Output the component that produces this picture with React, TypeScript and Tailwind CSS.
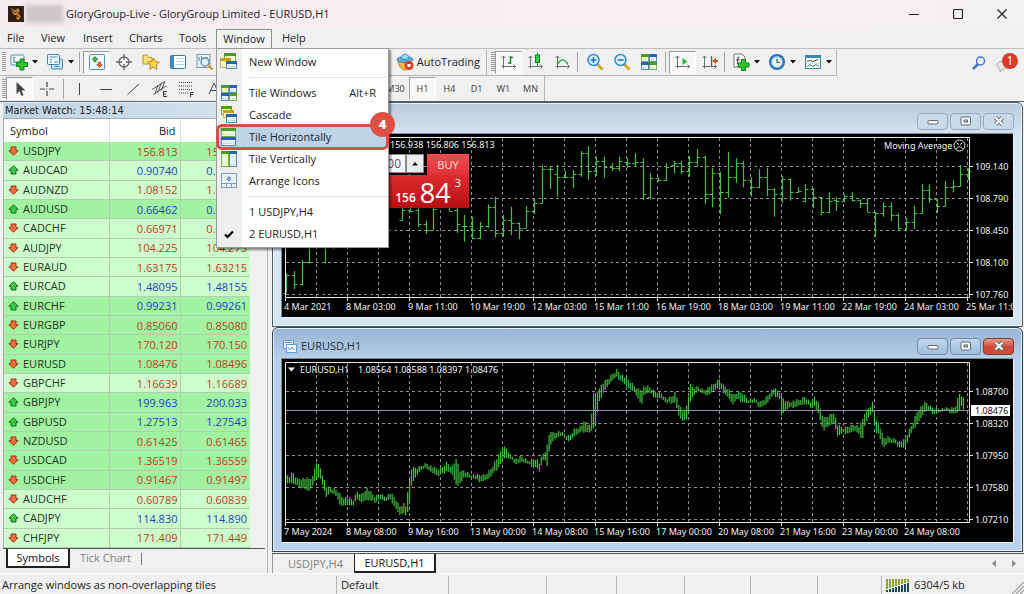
import type { ReactNode } from "react";

type IconProps = { children: ReactNode; size?: number };

function Icon({ children, size = 18 }: IconProps) {
  return (
    <svg width={size} height={size} viewBox="0 0 18 18" fill="none" className="shrink-0" aria-hidden="true">
      {children}
    </svg>
  );
}

const Plus = ({ x, y }: { x: number; y: number }) => (
  <path
    transform={`translate(${x} ${y})`}
    d="M3.5 0h4v3.5H11v4H7.5V11h-4V7.500H0v-4h3.5z"
    fill="#2fc52f"
    stroke="#12801a"
    strokeWidth="1"
  />
);

const NewChartIcon = () => (
  <Icon>
    <rect x="1" y="2" width="13" height="10" rx="1" fill="#f4fbff" stroke="#4d8fa8" />
    <path d="M4 4v6M3 5l1-1 1 1M4 9h8" stroke="#3d7f9c" />
    <Plus x={6.5} y={6} />
  </Icon>
);

const ProfilesIcon = () => (
  <Icon>
    <rect x="5.500" y="6" width="11" height="10" rx="1" fill="#d8ecfb" stroke="#3b82c0" />
    <rect x="1.500" y="1.500" width="12" height="10" rx="1" fill="#eef8ff" stroke="#3b82c0" />
    <path d="M3.500 4h8M4 6.500h2M4 9h2M8 9h4M8 13.500h6" stroke="#4a90c8" />
  </Icon>
);

const MarketIcon = () => (
  <Icon>
    <rect x="1.500" y="1.500" width="15" height="15" rx="1" fill="#f3fbff" stroke="#4c93bd" />
    <path d="M7 3.500L9.800 6.300H8.200V8.700H5.800V6.300H4.200z" fill="#3fc53f" stroke="#147a18" strokeWidth=".7" />
    <path d="M11.500 14.500L8.700 11.700h1.600V9.300h2.400v2.400h1.600z" fill="#f0693f" stroke="#a02c12" strokeWidth=".7" />
  </Icon>
);

const TargetIcon = () => (
  <Icon>
    <circle cx="9" cy="9" r="5" stroke="#666" strokeWidth="1.300" />
    <path d="M9 1v6M9 11v6M1 9h6M11 9h6" stroke="#666" strokeWidth="1.300" />
  </Icon>
);

const FolderStarIcon = () => (
  <Icon>
    <path d="M1 3.500V11h9V4.500H6L5 2H1.500z" fill="#ffe07a" stroke="#b98f1d" />
    <path d="M11.500 5l1.700 3.700 4.100.5-3 2.800.8 4.200-3.600-2.100-3.700 2.100.8-4.200-3-2.800 4.200-.5z" fill="#ffd93b" stroke="#a9851c" />
  </Icon>
);

const NavigatorIcon = () => (
  <Icon>
    <rect x="1.500" y="2.500" width="15" height="13" rx="1" fill="#fff" stroke="#3277ae" />
    <path d="M2 3h3v12H2z" fill="#3f8cc8" />
    <path d="M7.500 5.500h7.500M7.500 8.500h7.500M7.500 11.500h7.500" stroke="#b4cee2" />
  </Icon>
);

const TesterIcon = () => (
  <Icon>
    <rect x="1" y="1.500" width="13" height="13" fill="#eef3f7" stroke="#7b97ab" />
    <path d="M3 4v4M5.500 3v6M11 4v3" stroke="#5480a0" />
    <circle cx="9" cy="9" r="4" fill="#dff1ff" stroke="#5c88a8" strokeWidth="1.300" />
    <path d="M12 12l4.500 4.500" stroke="#d59a28" strokeWidth="2.400" />
  </Icon>
);

const RobotIcon = () => (
  <Icon>
    <path d="M2 8c1 6 4 9 7 9s5-2 6-6z" fill="#f0b93c" stroke="#b37a1b" strokeWidth=".8" />
    <ellipse cx="9" cy="6.500" rx="8" ry="3" fill="#54b0d6" stroke="#2b7ba2" strokeWidth=".8" />
    <path d="M5 5c0-5 8-5 8 0-2 2-6 2-8 0z" fill="#8fd6ef" stroke="#2b7ba2" strokeWidth=".8" />
    <circle cx="13" cy="12.500" r="4.500" fill="#dd3a20" />
    <rect x="11.500" y="11" width="3" height="3" fill="#fff" />
  </Icon>
);

const Axes = () => (
  <path d="M3.500 15.500V3M1.500 5l2-2 2 2M1.500 13.500h14M13.500 11.500l2 2-2 2" stroke="#66706b" />
);

const BarsIcon = () => (
  <Icon>
    <Axes />
    <path d="M10.500 3v8M10.500 4.500h2.500M8 10h2.500" stroke="#188a28" strokeWidth="1.500" />
  </Icon>
);

const CandleIcon = () => (
  <Icon>
    <Axes />
    <path d="M10.500 0v13" stroke="#14801f" />
    <rect x="8.500" y="2" width="4" height="7.500" fill="#2fd24a" stroke="#14801f" />
  </Icon>
);

const LineChartIcon = () => (
  <Icon>
    <Axes />
    <path d="M4 11c3-6 6-5 10 0" stroke="#2ba043" strokeWidth="1.300" />
  </Icon>
);

const LensIcon = ({ plus }: { plus: boolean }) => (
  <Icon>
    <path d="M11 11l5.500 5.500" stroke="#d6a52c" strokeWidth="3" />
    <circle cx="7.500" cy="7" r="5.500" fill="#d9f1fe" stroke="#2e8ecb" strokeWidth="1.500" />
    <path d={plus ? "M4.500 7h6M7.500 4v6" : "M4.500 7h6"} stroke="#1f6fb0" strokeWidth="1.500" />
  </Icon>
);

function MiniWindow({ x, y, w, h, c }: { x: number; y: number; w: number; h: number; c: "g" | "b" | "o" }) {
  const colors = { g: ["#4c9a2a", "#eef8df"], b: ["#2864b4", "#e6f1ff"], o: ["#c99a2c", "#fff5d2"] }[c];
  return (
    <g>
      <rect x={x + 0.5} y={y + 0.5} width={w - 1} height={h - 1} fill={colors[1]} stroke={colors[0]} strokeOpacity=".75" />
      <rect x={x} y={y} width={w} height="3" fill={colors[0]} />
      <path d={`M${x + 2} ${y + h - 2.5}h${w - 4}`} stroke={colors[0]} strokeDasharray="1 1" opacity=".3" />
    </g>
  );
}

const TileIcon = () => (
  <Icon>
    <MiniWindow x={1} y={1} w={8} h={8} c="g" />
    <MiniWindow x={9} y={1} w={8} h={8} c="b" />
    <MiniWindow x={1} y={9} w={8} h={8} c="b" />
    <MiniWindow x={9} y={9} w={8} h={8} c="g" />
  </Icon>
);

const CascadeIcon = () => (
  <Icon>
    <MiniWindow x={1} y={0} w={11} h={9} c="g" />
    <MiniWindow x={3} y={4} w={11} h={8} c="o" />
    <MiniWindow x={6} y={8} w={11} h={9} c="b" />
  </Icon>
);

const NewWindowIcon = () => (
  <Icon>
    <MiniWindow x={4} y={0} w={12} h={10} c="g" />
    <MiniWindow x={0} y={5} w={11} h={10} c="o" />
    <MiniWindow x={6} y={8} w={11} h={8} c="b" />
  </Icon>
);

const TileHIcon = () => (
  <Icon>
    <MiniWindow x={1} y={0} w={15} h={9} c="g" />
    <MiniWindow x={1} y={9} w={15} h={9} c="b" />
  </Icon>
);

const TileVIcon = () => (
  <Icon>
    <MiniWindow x={1} y={1} w={8} h={16} c="g" />
    <MiniWindow x={9} y={1} w={8} h={16} c="b" />
  </Icon>
);

const ArrangeIcon = () => (
  <Icon>
    <rect x="1.500" y="1.500" width="15" height="14" fill="#eaf3fa" stroke="#7f9db8" />
    <path d="M1 11.500h16M6.500 12v3M11.500 12v3" stroke="#7f9db8" />
    <path d="M9 4v5M7 7l2 2 2-2M7 6h4" stroke="#3f7fb8" />
  </Icon>
);

const ScrollIcon = () => (
  <Icon>
    <Axes />
    <path d="M8.500 5v7l5-3.500z" fill="#2fb542" />
  </Icon>
);

const ShiftIcon = () => (
  <Icon>
    <Axes />
    <path d="M10.500 3v10" stroke="#5a6660" strokeWidth="1.300" />
    <path d="M11 8l4-3v2h2v2h-2v2z" fill="#c8562c" />
  </Icon>
);

const IndicatorIcon = () => (
  <Icon>
    <path d="M2 1h8l3 3v10H2z" fill="#fafafa" stroke="#777" />
    <path d="M7.500 4c-2 0-2 1-2 3v4M4 7h4" stroke="#555" strokeWidth="1.200" />
    <Plus x={6} y={6.5} />
  </Icon>
);

const ClockIcon = () => (
  <Icon>
    <circle cx="9" cy="9" r="8" fill="#2473b9" />
    <circle cx="9" cy="9" r="5.500" fill="#e8f5ff" stroke="#7fb8e6" />
    <path d="M9 5.500V9.500h3" stroke="#4a5a68" strokeWidth="1.200" />
  </Icon>
);

const TemplateIcon = () => (
  <Icon>
    <rect x="1.500" y="2.500" width="15" height="13" fill="#f4fbff" stroke="#3d86b8" />
    <path d="M1 4h16" stroke="#3d86b8" strokeWidth="2" />
    <path d="M3 8.500l3-1 3 1 5-2" stroke="#444" />
    <path d="M3 13.500l3-2 3 2 3-2 3 2" stroke="#3a9a50" />
    <path d="M2 10.500h14" stroke="#9dc3dc" strokeDasharray="1 1" />
  </Icon>
);

const Grip = () => (
  <span className="ml-0.5 h-5 w-1 shrink-0 bg-[repeating-linear-gradient(to_bottom,#9c9c9c_0_1px,transparent_1px_2px)]" />
);
const Sep = () => <span className="mx-px h-5 w-px shrink-0 bg-[#a5a5a5]" />;

function Tool({ label, pressed, children }: { label: string; pressed?: boolean; children: ReactNode }) {
  return (
    <button
      type="button"
      aria-label={label}
      className={
        pressed
          ? "flex h-[23px] w-[27px] shrink-0 items-center justify-center border border-[#9b9b9b] border-r-white border-b-white bg-[#f8f8f8]"
          : "flex h-[23px] w-[27px] shrink-0 items-center justify-center"
      }
    >
      {children}
    </button>
  );
}

function DropTool({ label, children }: { label: string; children: ReactNode }) {
  return (
    <button type="button" aria-label={label} className="flex h-[23px] w-9 shrink-0 items-center gap-1 pl-1">
      {children}
      <svg width="6" height="4" viewBox="0 0 6 4" aria-hidden="true">
        <path d="M0 0h6L3 3.500z" fill="#111" />
      </svg>
    </button>
  );
}

function TitleBar() {
  return (
    <header className="flex h-7 shrink-0 items-center bg-linear-to-r from-[#f4eaf0] via-[#faedf3] via-55% to-[#f3f1f2]">
      <svg width="16" height="16" viewBox="0 0 16 16" className="ml-2 shrink-0" aria-hidden="true">
        <rect width="16" height="16" fill="#2c1c12" />
        <path d="M3 2l4 2 3-2 2 3-2 2 3 3-2 4-3-1 1-3-4-2z" fill="#b8802f" />
        <path d="M4 3l3 4 2-2M8 9l3 2" stroke="#5b3212" fill="none" />
      </svg>
      <span className="ml-0.5 h-[18px] w-[37px] shrink-0 bg-[#cbc6c9] blur-[2px]" />
      <h1 className="ml-[3px] flex-1 whitespace-nowrap text-[#222]">
        GloryGroup-Live - GloryGroup Limited - EURUSD,H1
      </h1>
      <div className="flex">
        <button type="button" aria-label="Minimize" className="flex h-7 w-11 items-center justify-center">
          <svg width="10" height="10"><path d="M0 5.500h10" stroke="#222" /></svg>
        </button>
        <button type="button" aria-label="Maximize" className="flex h-7 w-11 items-center justify-center">
          <svg width="10" height="10"><rect x=".5" y=".5" width="9" height="9" rx="1" fill="none" stroke="#222" strokeWidth="1.200" /></svg>
        </button>
        <button type="button" aria-label="Close" className="flex h-7 w-11 items-center justify-center">
          <svg width="10" height="10"><path d="M.5.5l9 9M9.500.5l-9 9" stroke="#222" strokeWidth="1.200" /></svg>
        </button>
      </div>
    </header>
  );
}

type Entry = { label: string; icon?: ReactNode; hint?: string };

const menuGroups: Entry[][] = [
  [{ label: "New Window", icon: <NewWindowIcon /> }],
  [
    { label: "Tile Windows", icon: <TileIcon />, hint: "Alt+R" },
    { label: "Cascade", icon: <CascadeIcon /> },
    { label: "Tile Horizontally", icon: <TileHIcon /> },
    { label: "Tile Vertically", icon: <TileVIcon /> },
    { label: "Arrange Icons", icon: <ArrangeIcon /> },
  ],
  [
    { label: "1 USDJPY,H4" },
    {
      label: "2 EURUSD,H1",
      icon: (
        <Icon>
          <path d="M5 9.500l2.500 2.500L13 6.500" stroke="#000" strokeWidth="2.200" />
        </Icon>
      ),
    },
  ],
];

function WindowMenu() {
  return (
    <div
      role="menu"
      className="absolute top-[19px] left-0 z-20 w-[173px] border border-[#9a9a9a] bg-[linear-gradient(to_right,#efefef_25px,#fff_25px)] py-0.5 shadow-[2px_2px_2px_rgba(0,0,0,0.45)]"
    >
      {menuGroups.map((group, g) => (
        <div key={g} role="group">
          {g > 0 && <div className="ml-8 h-[9px] bg-[linear-gradient(#e4e4e4,#e4e4e4)] bg-[length:100%_1px] bg-center bg-no-repeat" />}
          {group.map((item) => {
            const active = item.label === "Tile Horizontally";
            return (
              <div key={item.label} className="relative">
                <button
                  type="button"
                  role="menuitem"
                  className={
                    active
                      ? "flex h-[22px] w-full items-center bg-[#bdd3e8] pr-3 pl-[3px] text-[#1b2430]"
                      : "flex h-[22px] w-full items-center pr-3 pl-[3px] text-[#222]"
                  }
                >
                  <span className="flex w-[29px] shrink-0">{item.icon}</span>
                  <span className="whitespace-nowrap">{item.label}</span>
                  {item.hint && <span className="ml-auto">{item.hint}</span>}
                </button>
                {active && (
                  <>
                    <span className="pointer-events-none absolute -inset-x-px -inset-y-0.5 rounded-md border-[3px] border-[#d75045]" />
                    <span className="absolute -top-[14px] -right-[7px] flex size-[25px] items-center justify-center rounded-full bg-[#df4f43] text-[13px] font-black text-white">
                      4
                    </span>
                  </>
                )}
              </div>
            );
          })}
        </div>
      ))}
    </div>
  );
}

function MenuBar() {
  return (
    <nav className="flex h-5 shrink-0 items-center bg-[#f0f0f0] pl-[7px] text-[#222]">
      <button type="button" className="w-[34px] text-left">File</button>
      <button type="button" className="w-[42px] text-left">View</button>
      <button type="button" className="w-[46px] text-left">Insert</button>
      <button type="button" className="w-[50px] text-left">Charts</button>
      <button type="button" className="w-[37px] text-left">Tools</button>
      <div className="relative z-20">
        <button type="button" aria-expanded="true" className="block h-[19px] w-14 border border-b-0 border-[#8d8d8d] bg-[#f4f4f4]">
          Window
        </button>
        <WindowMenu />
      </div>
      <button type="button" className="ml-2.5">Help</button>
    </nav>
  );
}

function MainToolbar() {
  return (
    <div className="flex h-7 shrink-0 items-center border-t border-[#bdbdbd] bg-[#f0f0f0]">
      <div className="flex h-[26px] w-[487px] shrink-0 items-center border-r border-b border-[#b5b5b5]">
        <Grip />
        <DropTool label="New chart"><NewChartIcon /></DropTool>
        <DropTool label="Profiles"><ProfilesIcon /></DropTool>
        <Sep />
        <span className="w-0.5" />
        <Tool label="Market Watch" pressed><MarketIcon /></Tool>
        <Tool label="Data Window"><TargetIcon /></Tool>
        <Tool label="Navigator"><FolderStarIcon /></Tool>
        <Tool label="Terminal"><NavigatorIcon /></Tool>
        <Tool label="Strategy Tester"><TesterIcon /></Tool>
        <button type="button" className="mr-1.5 ml-auto flex items-center gap-[3px] text-[#1d1d1d]">
          <RobotIcon />
          AutoTrading
        </button>
      </div>
      <div className="flex h-[26px] shrink-0 items-center border-r border-b border-[#b5b5b5] pl-0.5">
        <Grip />
        <Tool label="Bar chart" pressed><BarsIcon /></Tool>
        <Tool label="Candlesticks"><CandleIcon /></Tool>
        <Tool label="Line chart"><LineChartIcon /></Tool>
        <Sep />
        <span className="w-0.5" />
        <Tool label="Zoom in"><LensIcon plus /></Tool>
        <Tool label="Zoom out"><LensIcon plus={false} /></Tool>
        <Tool label="Tile"><TileIcon /></Tool>
        <span className="w-0.5" />
        <Sep />
        <span className="w-0.5" />
        <Tool label="Auto scroll" pressed><ScrollIcon /></Tool>
        <Tool label="Chart shift"><ShiftIcon /></Tool>
        <Sep />
        <span className="w-0.5" />
        <DropTool label="Indicators"><IndicatorIcon /></DropTool>
        <DropTool label="Periods"><ClockIcon /></DropTool>
        <DropTool label="Templates"><TemplateIcon /></DropTool>
      </div>
      <div className="mr-1.5 ml-auto flex items-center gap-2.5">
        <button type="button" aria-label="Search">
          <svg width="14" height="14" viewBox="0 0 14 14" fill="none" className="block">
            <path d="M1 13l5-5" stroke="#4a72c8" strokeWidth="2.500" />
            <circle cx="8.500" cy="5" r="4" fill="#f2f7ff" stroke="#4a72c8" strokeWidth="1.500" />
          </svg>
        </button>
        <button type="button" aria-label="Messages" className="relative h-5 w-[22px]">
          <svg width="14" height="14" viewBox="0 0 14 14" className="absolute bottom-0 left-0">
            <path d="M1 6c0-5 11-5 11 0 0 3-3 4-5 4l-3 3V9.500C2 9 1 8 1 6z" fill="#e8e8ea" stroke="#a8a8ac" />
          </svg>
          <span className="absolute top-0 right-0 flex size-4 items-center justify-center rounded-full bg-[#dc3a26] text-[12px] text-white">1</span>
        </button>
      </div>
    </div>
  );
}

const timeframes = ["M30", "H1", "H4", "D1", "W1", "MN"];

function DrawToolbar() {
  return (
    <div className="flex h-[26px] shrink-0 items-center border-b border-[#5c6468] bg-[#f0f0f0]">
      <div className="flex h-[25px] w-[545px] shrink-0 items-center border-r border-[#b5b5b5]">
        <Grip />
        <Tool label="Cursor" pressed>
          <Icon><path d="M5.500 2v12l3-3 2 5 2-1-2-4.500h4z" fill="#444" /></Icon>
        </Tool>
        <Tool label="Crosshair">
          <Icon><path d="M9 2v5M9 11v5M2 9h5M11 9h5M8.500 9h1" stroke="#444" strokeWidth="1.200" /></Icon>
        </Tool>
        <span className="w-0.5" />
        <Sep />
        <Tool label="Vertical line"><Icon><path d="M9.500 3v12" stroke="#444" /></Icon></Tool>
        <Tool label="Horizontal line"><Icon><path d="M3 9.500h12" stroke="#444" /></Icon></Tool>
        <Tool label="Trendline"><Icon><path d="M3.500 14.500L15 4" stroke="#444" /></Icon></Tool>
        <Tool label="Equidistant channel">
          <Icon>
            <path d="M1 9.500L13 2M2 14.500L15 6M4 14l3-9M7 12.500l3-9M10 11l4-10" stroke="#555" />
            <path d="M16 11.500h-3.500v5H16M12.500 14H15" stroke="#333" />
          </Icon>
        </Tool>
        <Tool label="Fibonacci">
          <Icon>
            <path d="M1 2.500h14M1 6h14M1 9.500h14M1 13h9" stroke="#444" strokeDasharray="1 1" />
            <path d="M15.500 12.500H12.500v4.500M12.500 14.500h2.500" stroke="#333" />
          </Icon>
        </Tool>
        <Tool label="Text"><Icon><path d="M4 14L9 3l5 11M6 10.500h6" stroke="#444" /></Icon></Tool>
        <div className="ml-auto flex text-[9px] text-[#3a3a3a]">
          {timeframes.map((t) => (
            <button
              key={t}
              type="button"
              className={
                t === "H1"
                  ? "h-[23px] w-[27px] border border-[#a5a5a5] border-r-white border-b-white bg-[#f8f8f8]"
                  : "h-[23px] w-[27px]"
              }
            >
              {t}
            </button>
          ))}
        </div>
      </div>
    </div>
  );
}

type Quote = [symbol: string, bid: string, ask: string, up: 0 | 1, deep: 0 | 1];

const quotes: Quote[] = [
  ["USDJPY", "156.813", "156.843", 0, 1],
  ["AUDCAD", "0.90740", "0.90780", 1, 0],
  ["AUDNZD", "1.08152", "1.08202", 0, 0],
  ["AUDUSD", "0.66462", "0.66482", 1, 1],
  ["CADCHF", "0.66971", "0.67011", 0, 0],
  ["AUDJPY", "104.225", "104.275", 0, 0],
  ["EURAUD", "1.63175", "1.63215", 0, 0],
  ["EURCAD", "1.48095", "1.48155", 1, 0],
  ["EURCHF", "0.99231", "0.99261", 1, 1],
  ["EURGBP", "0.85060", "0.85080", 0, 1],
  ["EURJPY", "170.120", "170.150", 0, 1],
  ["EURUSD", "1.08476", "1.08496", 0, 1],
  ["GBPCHF", "1.16639", "1.16689", 0, 0],
  ["GBPJPY", "199.963", "200.033", 1, 1],
  ["GBPUSD", "1.27513", "1.27543", 1, 1],
  ["NZDUSD", "0.61425", "0.61465", 0, 1],
  ["USDCAD", "1.36519", "1.36559", 0, 1],
  ["USDCHF", "0.91467", "0.91497", 0, 1],
  ["AUDCHF", "0.60789", "0.60839", 0, 0],
  ["CADJPY", "114.830", "114.890", 1, 0],
  ["CHFJPY", "171.409", "171.449", 0, 0],
];

function Direction({ up }: { up: boolean }) {
  return (
    <svg width="11" height="10" viewBox="0 0 11 10" className="shrink-0" aria-label={up ? "up" : "down"}>
      {up ? (
        <path d="M5.500.7l4.600 4.600H8v3.700H3V5.300H.9z" fill="#3fc64a" stroke="#11701e" />
      ) : (
        <path d="M5.500 9.300l4.600-4.600H8V1H3v3.700H.9z" fill="#f0713a" stroke="#a3301a" />
      )}
    </svg>
  );
}

function MarketWatch() {
  return (
    <aside className="flex w-[272px] shrink-0 flex-col bg-[#f0f0f0] pl-[3px]">
      <div className="mr-1 flex min-h-0 flex-1 flex-col border-r border-[#b4b4b4]">
        <h2 className="mt-px flex h-[15px] shrink-0 items-center bg-linear-to-r from-[#bfd3e6] to-[#d8e4ef] pl-0.5 font-['DejaVu_Sans_Condensed','DejaVu_Sans',sans-serif] text-[#222]">
          Market Watch: 15:48:14
        </h2>
        <div className="mr-0.5 min-h-0 flex-1 border-t border-l border-[#a8a8a8] bg-[#f0f0f0]">
          <table className="h-full w-[246px] table-fixed border-collapse">
            <thead>
              <tr className="h-[23px] bg-white text-[#222]">
                <th className="w-[105px] border-r border-[#e2e2e2] pl-1.5 text-left font-normal">Symbol</th>
                <th className="w-[71px] border-r border-[#e2e2e2] pr-1 text-right font-normal">Bid</th>
                <th className="pr-1 text-right font-normal">Ask</th>
              </tr>
            </thead>
            <tbody>
              {quotes.map(([symbol, bid, ask, up, deep]) => (
                <tr key={symbol} className={deep ? "bg-[#a1f2a1]" : "bg-[#ccffcc]"}>
                  <td className="border-r border-b border-[#b3cdb3] p-0 pl-1 text-[#1c331c]">
                    <span className="flex h-[18px] items-center gap-1">
                      <Direction up={up === 1} />
                      {symbol}
                    </span>
                  </td>
                  <td className={up ? "border-r border-b border-[#b3cdb3] p-0 pr-0.5 text-right leading-none text-[#1c3fc0]" : "border-r border-b border-[#b3cdb3] p-0 pr-0.5 text-right leading-none text-[#bf3a1c]"}>
                    {bid}
                  </td>
                  <td className={up ? "border-b border-[#b3cdb3] p-0 pr-[3px] text-right leading-none text-[#1c3fc0]" : "border-b border-[#b3cdb3] p-0 pr-[3px] text-right leading-none text-[#bf3a1c]"}>
                    {ask}
                  </td>
                </tr>
              ))}
            </tbody>
          </table>
        </div>
        <div className="mr-0.5 flex h-[25px] shrink-0 items-start border-t border-[#555]">
          <button type="button" className="ml-[3px] h-[19px] w-16 border-2 border-t-0 border-[#222] bg-white text-[#111]">Symbols</button>
          <button type="button" className="ml-2.5 h-[17px] text-[#808080]">Tick Chart</button>
          <span className="mt-1 ml-2.5 h-3 w-px bg-[#777]" />
        </div>
      </div>
    </aside>
  );
}

/* Each bar is [high, low, open, close] as vertical plot offsets, in thirds of a pixel. */
const yenBars: ([number, number, number, number] | null)[] = [
  [520, 578, 578, 525], [513, 567, 525, 553], [480, 557, 553, 485], [430, 490, 485, 440], [425, 445, 440, 435],
  [420, 490, 435, 442], [400, 447, 442, 430], null, null, null, null, null, null, null, null,
  [325, 362, 360, 330], [315, 335, 330, 332], [325, 382, 330, 372], [362, 402, 372, 390], [325, 390, 390, 328],
  null, [315, 333, 320, 332], [325, 398, 330, 372], [345, 425, 378, 378], [350, 417, 378, 415],
  [365, 417, 415, 378], [313, 385, 378, 322], [290, 412, 322, 400], [345, 410, 400, 360], [320, 405, 360, 370],
  [367, 418, 370, 383], [318, 383, 383, 333], [297, 342, 333, 310], [195, 310, 310, 208], [197, 267, 208, 208],
  [195, 290, 222, 230], [213, 235, 230, 232], [210, 265, 232, 222], [153, 230, 222, 160], [138, 240, 160, 213],
  [170, 228, 213, 182], [170, 233, 182, 200], [190, 213, 200, 203], [170, 213, 203, 183], [175, 203, 185, 190],
  [160, 200, 190, 187], [175, 300, 187, 283], [220, 298, 290, 235], [232, 245, 235, 240], [190, 243, 240, 200],
  [183, 220, 195, 190], [183, 222, 190, 213], [168, 230, 213, 185], [147, 200, 185, 170], [168, 313, 170, 283],
  [203, 322, 283, 220], [215, 343, 220, 277], [155, 293, 277, 230], [175, 248, 230, 190], [183, 262, 190, 240],
  [232, 290, 240, 260], [208, 265, 260, 232], [203, 288, 232, 268], [265, 350, 268, 283], [227, 308, 283, 237],
  [235, 302, 237, 275], [262, 278, 275, 272], [252, 307, 302, 268], [265, 325, 268, 292], [290, 345, 292, 335],
  [277, 340, 335, 302], [292, 333, 300, 303], [283, 305, 303, 287], [275, 305, 287, 300], [298, 325, 300, 310],
  [293, 335, 310, 335], [335, 412, 335, 340], [307, 350, 340, 317], [307, 363, 317, 345], [340, 392, 345, 383],
  [353, 393, 390, 367], [317, 388, 367, 340], [252, 342, 340, 270], [253, 308, 270, 298], [297, 340, 298, 317],
  [243, 320, 317, 262], [240, 277, 262, 257], [195, 260, 257, 223], [205, 240, 223, 213],
];

/* Range of the hourly bars along the plot: [x, high, low] triples, in thirds of a pixel. */
const euroRange = [
  47, 450, 475, 58, 455, 470, 68, 440, 475, 80, 462, 480, 95, 460, 495, 105, 460, 490, 118, 462, 497, 130, 455, 480,
  138, 408, 460, 150, 425, 462, 160, 455, 480, 168, 485, 515, 180, 490, 502, 195, 492, 510, 205, 500, 530, 215, 515, 540,
  235, 520, 540, 250, 525, 545, 262, 500, 520, 275, 510, 530, 290, 488, 525, 300, 500, 530, 315, 515, 530, 330, 505, 520,
  345, 515, 530, 362, 505, 525, 375, 520, 545, 390, 545, 570, 400, 535, 565, 408, 545, 575, 415, 478, 560, 425, 430, 475,
  437, 430, 455, 450, 425, 440, 470, 415, 428, 485, 425, 440, 505, 432, 455, 515, 430, 450, 530, 412, 435, 545, 425, 445,
  558, 405, 480, 565, 420, 487, 572, 445, 475, 580, 435, 455, 600, 448, 458, 625, 450, 468, 645, 450, 465, 660, 435, 460,
  675, 410, 440, 690, 385, 420, 697, 365, 400, 710, 370, 400, 722, 392, 405, 740, 402, 415, 755, 395, 410, 775, 408, 420,
  800, 400, 425, 808, 415, 440, 818, 390, 410, 825, 380, 400, 829, 378, 465, 833, 350, 400, 840, 315, 360, 850, 325, 345,
  865, 318, 335, 880, 325, 335, 897, 335, 347, 912, 313, 335, 930, 305, 325, 945, 290, 318, 962, 305, 322, 970, 200, 310,
  978, 215, 305, 985, 190, 240, 1000, 175, 200, 1015, 160, 180, 1030, 145, 165, 1041, 133, 158, 1055, 150, 165,
  1070, 160, 185, 1085, 175, 200, 1100, 190, 208, 1115, 195, 240, 1122, 185, 210, 1135, 185, 205, 1155, 200, 215,
  1175, 205, 220, 1190, 222, 238, 1205, 215, 232, 1217, 203, 230, 1225, 235, 270, 1238, 258, 290, 1252, 240, 285,
  1260, 180, 230, 1270, 190, 210, 1285, 185, 200, 1300, 195, 210, 1320, 185, 205, 1335, 175, 195, 1348, 162, 190,
  1360, 180, 200, 1375, 190, 215, 1388, 212, 240, 1400, 205, 225, 1415, 202, 228, 1435, 222, 235, 1455, 222, 235,
  1470, 232, 245, 1490, 215, 238, 1510, 190, 212, 1528, 200, 215, 1534, 215, 270, 1550, 230, 255, 1570, 228, 245,
  1590, 225, 240, 1605, 215, 240, 1622, 232, 245, 1632, 215, 240, 1645, 235, 265, 1660, 280, 322, 1675, 272, 300,
  1692, 262, 295, 1703, 300, 335, 1720, 310, 325, 1740, 302, 322, 1755, 298, 318, 1767, 305, 330, 1776, 290, 350,
  1785, 262, 295, 1800, 245, 270, 1810, 228, 260, 1815, 275, 325, 1828, 300, 330, 1840, 340, 367, 1855, 337, 352,
  1875, 342, 358, 1890, 350, 365, 1905, 345, 368, 1915, 320, 345, 1930, 290, 315, 1940, 262, 295, 1955, 243, 275,
  1967, 232, 258, 1980, 245, 262, 1995, 250, 265, 2015, 250, 260, 2035, 250, 260, 2055, 248, 265, 2068, 205, 260,
  2077, 213, 240, 2085, 225, 278,
];

const offset = (v: number) => Math.round((v / 3 - 35) * 10) / 10;

const yenPath = yenBars
  .map((bar, i) => {
    if (!bar) return "";
    const x = Math.round(3 + i * 7.75) + 0.5;
    const [h, l, o, c] = bar.map(offset);
    return `M${x} ${h}V${l}M${x - 3} ${Math.round(o) + 0.5}h3M${x} ${Math.round(c) + 0.5}h3`;
  })
  .join("");

const euroPath = (() => {
  let d = "";
  let k = 0;
  for (let i = 0; i < 351; i++) {
    const zx = 47 + i * 5.81;
    while (k + 5 < euroRange.length && euroRange[k + 3] < zx) k += 3;
    const last = k + 3 >= euroRange.length;
    const n = last ? k : k + 3;
    const span = euroRange[n] - euroRange[k] || 1;
    const t = Math.min(1, Math.max(0, (zx - euroRange[k]) / span));
    const hi = euroRange[k + 1] + (euroRange[n + 1] - euroRange[k + 1]) * t;
    const lo = euroRange[k + 2] + (euroRange[n + 2] - euroRange[k + 2]) * t;
    const jitter = ((i * 37) % 11) - 5;
    d += `M${(zx / 3 - 13).toFixed(1)} ${offset(hi + jitter * 0.8)}V${offset(lo + (((i * 53) % 9) - 4) * 0.9)}`;
  }
  return d;
})();

function ChartPlot({
  path,
  prices,
  dates,
  thick,
  children,
}: {
  path: string;
  prices: string[];
  dates: string[];
  thick: number;
  children?: ReactNode;
}) {
  const columns = Array.from({ length: 22 }, (_, i) => 33.5 + i * 31);
  return (
    <svg width="100%" height="182" className="block bg-black font-['Noto_Sans',sans-serif] text-[9px]" fill="#f2f2f2">
      <g stroke="#87929a" strokeDasharray="3 3">
        {columns.map((x) => <path key={x} d={`M${x} 3V162`} />)}
        {prices.map((p, i) => <path key={p} d={`M3 ${31.5 + i * 32}H687`} />)}
      </g>
      <path d={path} stroke="#3fbf3f" strokeWidth={thick} fill="none" />
      <path d="M2.500 162.500V2.500H686.500V162.500H2.500" stroke="#e8e8e8" fill="none" />
      {prices.map((p, i) => (
        <g key={p}>
          <path d={`M687 ${31.5 + i * 32}h3`} stroke="#e8e8e8" />
          <text x="692" y={35 + i * 32}>{p}</text>
        </g>
      ))}
      {dates.map((t, i) => (
        <g key={t}>
          <path d={`M${2.5 + i * 62} 163v3`} stroke="#e8e8e8" />
          <text x={1 + i * 62} y="175">{t}</text>
        </g>
      ))}
      {children}
    </svg>
  );
}

function FrameButtons({ active }: { active: boolean }) {
  const plain = active
    ? "flex h-[17px] w-[31px] items-center justify-center rounded-sm border border-[#6f8cab] bg-linear-to-b from-[#c3d8ee] to-[#9fbddc]"
    : "flex h-[17px] w-[31px] items-center justify-center rounded-sm border border-[#94a9be] bg-[#cbdae8]";
  const close = active
    ? "flex h-[17px] w-[31px] items-center justify-center rounded-sm border border-[#7a3a34] bg-linear-to-b from-[#e59c8e] via-[#cf4a38] to-[#c94d3a]"
    : plain;
  return (
    <div className="ml-auto flex gap-0.5">
      <button type="button" aria-label="Minimize chart" className={plain}>
        <svg width="12" height="8"><rect x="1" y="3.500" width="10" height="3.500" rx="1" fill="#fff" stroke="#5a6878" /></svg>
      </button>
      <button type="button" aria-label="Maximize chart" className={plain}>
        <svg width="12" height="10">
          <rect x="1" y="1" width="9.500" height="8" rx="1" fill="#fff" stroke="#5a6878" />
          <rect x="4" y="4" width="3.500" height="2" fill="#c5d5e5" stroke="#5a6878" />
        </svg>
      </button>
      <button type="button" aria-label="Close chart" className={close}>
        <svg width="12" height="10">
          <path d="M2.500 1.500l7 7M9.500 1.500l-7 7" stroke="#5a6878" strokeWidth="4" />
          <path d="M2.500 1.500l7 7M9.500 1.500l-7 7" stroke="#fff" strokeWidth="2.200" />
        </svg>
      </button>
    </div>
  );
}

function ChartWindow({ title, active, children }: { title?: string; active: boolean; children: ReactNode }) {
  return (
    <section
      className={
        active
          ? "rounded-t-md border border-[#2f474c] bg-linear-to-b from-[#98b5d3] via-[#b9d1ea] via-15% to-[#b9d1ea] px-2 pb-2 shadow-[inset_0_0_0_1px_#e3eefa]"
          : "rounded-t-md border border-[#4a5b66] bg-linear-to-b from-[#bccbda] via-[#d7e4f2] via-15% to-[#d7e4f2] px-2 pb-2 shadow-[inset_0_0_0_1px_#eef4fb]"
      }
    >
      <div className="flex h-[30px] items-center pt-1.5 pl-0.5 text-[#22303c]">
        {title && (
          <>
            <svg width="14" height="13" viewBox="0 0 14 13" fill="none" className="mr-1 shrink-0" aria-hidden="true">
              <rect x=".5" y=".5" width="10" height="8" fill="#eaf5ff" stroke="#5a9ada" />
              <rect x="3.500" y="4.500" width="10" height="8" fill="#fff" stroke="#5a9ada" />
              <path d="M2 2.500h7M5 7l2 3 2-3 2 3" stroke="#5a9ada" />
            </svg>
            <h3>{title}</h3>
          </>
        )}
        <FrameButtons active={active} />
      </div>
      <div className="relative border border-t-[#7e8c99] border-r-[#f4f4f4] border-b-[#f4f4f4] border-l-[#7e8c99]">
        <div className="border-t border-l border-black">{children}</div>
      </div>
    </section>
  );
}

function TradePanel() {
  return (
    <div className="absolute top-5 left-[60px] w-[127px] text-white">
      <div className="flex h-[21px] justify-end">
        <input
          aria-label="Volume"
          defaultValue="1.00"
          className="h-[19px] w-12 border border-[#888] bg-[#fafafa] pr-1 text-right text-[12px] text-[#555]"
        />
        <button type="button" aria-label="Increase volume" className="mr-[3px] flex h-[19px] w-[18px] items-center justify-center border border-[#888] bg-[#ececec]">
          <svg width="6" height="4"><path d="M0 3.500h6L3 0z" fill="#111" /></svg>
        </button>
        <button type="button" className="h-[21px] w-[42px] bg-linear-to-b from-[#f04b50] to-[#e03338] text-[#ffe1df]">BUY</button>
      </div>
      <div className="flex h-[33px] items-end justify-end gap-1 bg-linear-to-b from-[#dc2c30] to-[#b80d10] pr-2 pb-1 leading-none">
        <span className="text-[12px] font-semibold">156</span>
        <span className="text-[27px] leading-[22px]">84</span>
        <span className="self-start pt-0.5 text-[11px]">3</span>
      </div>
    </div>
  );
}

function Charts() {
  return (
    <main className="flex min-w-0 flex-1 flex-col bg-[#f0f0f0]">
      <div className="flex flex-col pr-px">
        <ChartWindow active={false}>
          <ChartPlot
            path={yenPath}
            thick={1.2}
            prices={["109.140", "108.790", "108.450", "108.100", "107.760"]}
            dates={[
              "4 Mar 2021", "8 Mar 03:00", "9 Mar 11:00", "10 Mar 19:00", "12 Mar 03:00", "15 Mar 11:00",
              "16 Mar 19:00", "18 Mar 03:00", "19 Mar 11:00", "22 Mar 19:00", "24 Mar 03:00", "25 Mar 11:00",
            ]}
          >
            <text x="107" y="13">156.938 156.806 156.813</text>
            <text x="601" y="14">Moving Average</text>
            <g stroke="#eee" fill="none">
              <circle cx="676.500" cy="10.500" r="5.500" />
              <path d="M673.500 14c1-3 5-3 6 0M673.500 8l2.500 1.500M679.500 8l-2.500 1.500" />
            </g>
          </ChartPlot>
          <TradePanel />
        </ChartWindow>
        <ChartWindow title="EURUSD,H1" active>
          <ChartPlot
            path={euroPath}
            thick={1.2}
            prices={["1.08700", "1.08320", "1.07950", "1.07580", "1.07210"]}
            dates={[
              "7 May 2024", "8 May 08:00", "9 May 16:00", "13 May 00:00", "14 May 08:00", "15 May 16:00",
              "17 May 00:00", "20 May 08:00", "21 May 16:00", "23 May 00:00", "24 May 08:00",
            ]}
          >
            <path d="M3 50.500H687" stroke="#8f93ad" />
            <path d="M5 7.500h7L8.500 11.500z" fill="#fff" />
            <text x="17" y="13">EURUSD,H1</text>
            <text x="75" y="13">1.08564 1.08588 1.08397 1.08476</text>
            <rect x="688" y="45" width="39" height="11" fill="#fff" />
            <text x="692" y="54" fill="#111">1.08476</text>
          </ChartPlot>
        </ChartWindow>
      </div>
      <div className="mt-px flex flex-1 items-start border-t border-[#555]">
        <button type="button" className="h-5 w-[82px] border-l border-[#999] pl-1 text-[#808080]">USDJPY,H4</button>
        <button type="button" className="h-[19px] w-[82px] border-2 border-t-0 border-l border-[#222] bg-white text-[#111]">EURUSD,H1</button>
        <div className="mt-1.5 mr-2 ml-auto flex gap-4">
          <button type="button" aria-label="Previous tab"><svg width="4" height="7" className="block"><path d="M4 0v7L0 3.500z" fill="#8a8a8a" /></svg></button>
          <button type="button" aria-label="Next tab"><svg width="4" height="7" className="block"><path d="M0 0v7l4-3.500z" fill="#8a8a8a" /></svg></button>
        </div>
      </div>
    </main>
  );
}

function StatusBar() {
  return (
    <footer className="flex h-[21px] shrink-0 items-center border-t border-[#fafafa] bg-[#f0f0f0] pt-0.5 whitespace-nowrap text-[#222]">
      <span className="min-w-0 flex-1 overflow-hidden pl-0.5">Arrange windows as non-overlapping tiles</span>
      <span className="flex h-full w-[112px] items-center border-l border-[#b5b5b5] pl-1">Default</span>
      <span className="h-full w-[98px] border-l border-[#b5b5b5]" />
      <span className="h-full w-[70px] border-l border-[#b5b5b5]" />
      <span className="h-full w-[68px] border-l border-[#b5b5b5]" />
      <span className="h-full w-[66px] border-l border-[#b5b5b5]" />
      <span className="h-full w-[67px] border-l border-[#b5b5b5]" />
      <span className="h-full w-[64px] border-l border-[#b5b5b5]" />
      <span className="flex h-full w-[143px] items-center gap-1 border-l border-[#b5b5b5] pl-1">
        <svg width="24" height="13" viewBox="0 0 24 13" aria-hidden="true">
          {Array.from({ length: 8 }, (_, i) => (
            <g key={i}>
              <rect x={i * 3} y="0" width="2" height={10 - i} fill="#8ea52c" />
              <rect x={i * 3} y={11 - i} width="2" height={2 + i} fill="#1d4a5c" />
            </g>
          ))}
        </svg>
        6304/5 kb
        <svg width="12" height="12" className="ml-auto self-end" aria-hidden="true">
          <path d="M0 12L12 0M4 12l8-8M8 12l4-4" stroke="#999" strokeWidth="1.200" />
        </svg>
      </span>
    </footer>
  );
}

export default function App() {
  return (
    <div className="flex h-screen flex-col overflow-hidden bg-[#f0f0f0] font-['Open_Sans','Noto_Sans',sans-serif] text-[11px] leading-4">
      <TitleBar />
      <MenuBar />
      <MainToolbar />
      <DrawToolbar />
      <div className="flex min-h-0 flex-1">
        <MarketWatch />
        <Charts />
      </div>
      <StatusBar />
    </div>
  );
}
